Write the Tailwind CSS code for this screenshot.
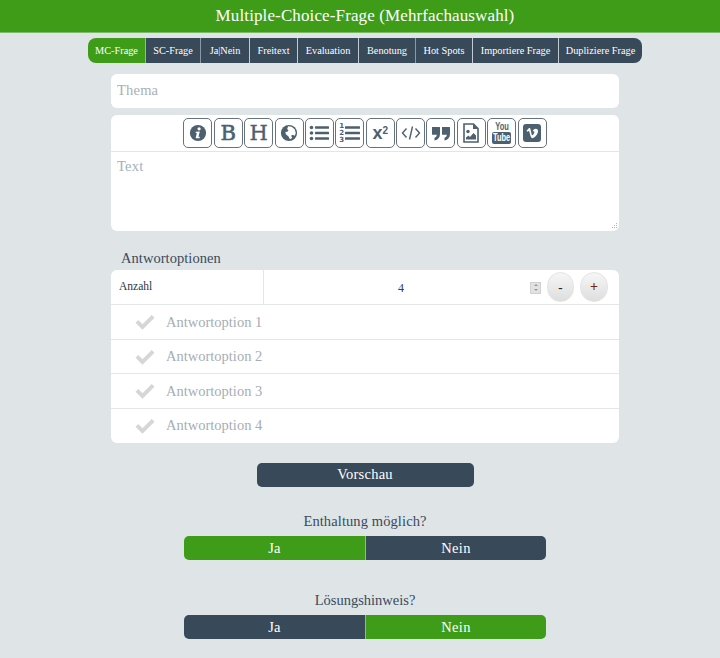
<!DOCTYPE html>
<html lang="de">
  <head>
    <meta charset="UTF-8" />
    <meta name="viewport" content="width=device-width, initial-scale=1.0" />
    <title>Multiple-Choice-Frage</title>
    <script src="https://cdn.jsdelivr.net/npm/@tailwindcss/browser@4"></script>
  </head>
  <body class="bg-[#dfe4e7] overflow-hidden h-[658px] font-['Liberation_Serif',serif] text-[#3a4a5a]">
    <div class="w-[730px] flex flex-col items-center">
      <header class="w-full h-[33px] bg-[#3e9c18] border-b border-[#7fb96a] flex items-center justify-center text-white text-[17px] tracking-[0.12px]">
        Multiple-Choice-Frage (Mehrfachauswahl)
      </header>

      <nav class="mt-[5px] flex h-[25px] w-[554px] rounded-[8px] overflow-hidden text-white text-[10.3px] leading-[25px] text-center">
        <a class="w-[58px] bg-[#3e9c18] border-r border-[#8fbf7d]">MC-Frage</a>
        <a class="w-[55px] bg-[#38495a] border-r border-[#8c99a5]">SC-Frage</a>
        <a class="w-[49px] bg-[#38495a] border-r border-[#c3cbd2]">Ja|Nein</a>
        <a class="w-[48px] bg-[#38495a] border-r border-[#c3cbd2]">Freitext</a>
        <a class="w-[61px] bg-[#38495a] border-r border-[#c3cbd2]">Evaluation</a>
        <a class="w-[57px] bg-[#38495a] border-r border-[#8c99a5]">Benotung</a>
        <a class="w-[57px] bg-[#38495a] border-r border-[#c3cbd2]">Hot Spots</a>
        <a class="w-[86px] bg-[#38495a] border-r border-[#c3cbd2]">Importiere Frage</a>
        <a class="flex-1 bg-[#38495a]">Dupliziere Frage</a>
      </nav>

      <div class="mt-[11px] w-[508px] h-[34px] bg-white rounded-[6px] px-[6px] text-[14.5px] leading-[33px] text-[#a9b0b8] tracking-[0.2px]">Thema</div>

      <section class="mt-[7px] w-[508px] h-[116px] bg-white rounded-[6px] flex flex-col">
        <div class="h-[37px] pt-[3px] border-b border-[#e3e6e8] flex justify-center gap-[1.4px] text-[#4d6070]">
          <button class="w-[29px] h-[30px] rounded-[5px] border border-[#66727d] flex items-center justify-center">
            <svg viewBox="0 0 20 20" class="w-[18px] h-[18px]"><circle cx="10" cy="10" r="9" fill="#4d6070" /><circle cx="11.200" cy="5.300" r="1.800" fill="#fff" /><path d="M7.600 8.600 12 8.200 10.500 14.200 12 14.200 11.700 15.700 7.400 15.700 8.700 10 7.400 10Z" fill="#fff" /></svg>
          </button>
          <button class="w-[29px] h-[30px] rounded-[5px] border border-[#66727d] text-[21px] leading-none font-['DejaVu_Serif',serif] [-webkit-text-stroke:0.6px_#4d6070]">B</button>
          <button class="w-[29px] h-[30px] rounded-[5px] border border-[#66727d] text-[21px] leading-none font-['DejaVu_Serif',serif] [-webkit-text-stroke:0.4px_#4d6070]">H</button>
          <button class="w-[29px] h-[30px] rounded-[5px] border border-[#66727d] flex items-center justify-center">
            <svg viewBox="0 0 20 20" class="w-[18px] h-[18px]"><circle cx="10" cy="10" r="9" fill="#4d6070" /><path d="M9 2.500 13 3 16.500 6 17.500 10 16.500 13 14 12 12.500 13 13.500 15.500 11 17 9.500 14 6.500 11.500 6 9 8 8.500 9.500 7.500 8 5.500Z" fill="#fff" /></svg>
          </button>
          <button class="w-[29px] h-[30px] rounded-[5px] border border-[#66727d] flex items-center justify-center">
            <svg viewBox="0 0 20 18" class="w-[20px] h-[18px]" fill="#4d6070"><circle cx="2.500" cy="3.500" r="1.800" /><circle cx="2.500" cy="9" r="1.800" /><circle cx="2.500" cy="14.500" r="1.800" /><rect x="6" y="2.200" width="14" height="2.600" rx=".5" /><rect x="6" y="7.700" width="14" height="2.600" rx=".5" /><rect x="6" y="13.200" width="14" height="2.600" rx=".5" /></svg>
          </button>
          <button class="w-[29px] h-[30px] rounded-[5px] border border-[#66727d] flex items-center justify-center gap-[1px]">
            <span class="flex flex-col text-[7px] leading-[7px] font-bold font-['DejaVu_Sans',sans-serif]"><span>1</span><span>2</span><span>3</span></span>
            <svg viewBox="0 0 15 18" class="w-[15px] h-[18px]" fill="#4d6070"><rect y="2.200" width="15" height="2.600" rx=".5" /><rect y="7.700" width="15" height="2.600" rx=".5" /><rect y="13.200" width="15" height="2.600" rx=".5" /></svg>
          </button>
          <button class="w-[29px] h-[30px] rounded-[5px] border border-[#66727d] text-[18px] leading-none font-bold font-['Liberation_Sans',sans-serif]">x<sup class="text-[10px]">2</sup></button>
          <button class="w-[29px] h-[30px] rounded-[5px] border border-[#66727d] flex items-center justify-center">
            <svg viewBox="0 0 20 16" class="w-[20px] h-[16px]" fill="none" stroke="#4d6070" stroke-width="1.400"><path d="M5.500 3.500 1.500 8l4 4.500M14.500 3.500l4 4.500-4 4.500M11.500 1.500 8.500 14.500" /></svg>
          </button>
          <button class="w-[29px] h-[30px] rounded-[5px] border border-[#66727d] flex items-center justify-center">
            <svg viewBox="0 0 20 16" class="w-[20px] h-[17px]" fill="#4d6070"><path d="M1 1.500h7.500a.5.5 0 0 1 .5.5v6.500c0 3.500-2 5.800-5.500 6.500v-2.800c1.500-.4 2.200-1.400 2.300-3H1.500a.5.5 0 0 1-.5-.5ZM11 1.500h7.500a.5.5 0 0 1 .5.5v6.500c0 3.500-2 5.800-5.500 6.500v-2.800c1.500-.4 2.200-1.400 2.300-3h-4.300a.5.5 0 0 1-.5-.5Z" /></svg>
          </button>
          <button class="w-[29px] h-[30px] rounded-[5px] border border-[#66727d] flex items-center justify-center">
            <svg viewBox="0 0 16 20" class="w-[16px] h-[20px]"><path d="M1 1h9.500L15 5.500V19H1Z" fill="#fff" stroke="#4d6070" stroke-width="1.600" /><path d="M10 1v5h5" fill="#4d6070" /><circle cx="5" cy="8.500" r="1.700" fill="#4d6070" /><path d="M3 16.500v-2l2.500-2 1.500 1.500 3.500-4 2.500 2.500v4Z" fill="#4d6070" /></svg>
          </button>
          <button class="w-[29px] h-[30px] rounded-[5px] border border-[#66727d] flex flex-col items-center justify-center">
            <span class="text-[10px] leading-[10px] font-bold font-['Liberation_Sans',sans-serif] scale-x-75">You</span>
            <span class="w-[19px] h-[12px] rounded-[2px] bg-[#4d6070] text-white text-[10px] leading-[12px] text-center whitespace-nowrap font-bold font-['Liberation_Sans',sans-serif]"><span class="inline-block scale-x-75 -mx-1">Tube</span></span>
          </button>
          <button class="w-[29px] h-[30px] rounded-[5px] border border-[#66727d] flex items-center justify-center">
            <svg viewBox="0 0 18 18" class="w-[18px] h-[18px]"><rect width="18" height="18" rx="3" fill="#4d6070" /><path d="M3.500 6.800 4.300 7.800c1-.7 1.500-1 1.800-.6.700 1 1 4.500 2 6.100.6 1 1.500 1.200 2.600.5 1.800-1.200 4-3.700 4.300-6.100.2-1.900-.6-3-2.200-3-1.500 0-2.800 1-3.300 2.900 1-.5 2-.3 1.800.8-.1.800-1.300 2.800-2 2.800-.8 0-1-3.500-1.600-5.200C7.300 3.600 6.500 3.600 5.800 4.300Z" fill="#fff" /></svg>
          </button>
        </div>
        <div class="relative flex-1 px-[6px] pt-[6px] text-[14.5px] leading-[17px] text-[#a3b1bd] tracking-[0.2px]">
          Text
          <svg viewBox="0 0 7 7" class="absolute right-[1px] bottom-[1px] w-[7px] h-[7px]" fill="#b5b5b5"><rect x="5" y="0" width="1" height="1" /><rect x="3" y="2" width="1" height="1" /><rect x="5" y="2" width="1" height="1" /><rect x="1" y="4" width="1" height="1" /><rect x="3" y="4" width="1" height="1" /><rect x="5" y="4" width="1" height="1" /></svg>
        </div>
      </section>

      <div class="mt-[18px] w-[508px] pl-[10px] text-[14.5px] leading-[18px] tracking-[0.05px]">Antwortoptionen</div>

      <section class="mt-[3px] w-[508px] bg-white rounded-[6px] text-[14.5px] text-[#a6adb4]">
        <div class="h-[35px] flex items-center border-b border-[#e4e7e9]">
          <div class="w-[153px] h-full border-r border-[#e4e7e9] pl-2 flex items-center text-[11.5px] text-[#2a3540]">Anzahl</div>
          <div class="flex-1 flex items-center relative h-full">
            <span class="w-[274px] text-center text-[12px] text-[#2f4254] pt-[2px]">4</span>
            <span class="w-[11px] h-[12px] ml-[-8px] mt-[1px] bg-[#e2e2e2] border border-[#d0d0d0] flex flex-col items-center justify-around">
              <span class="w-0 h-0 border-x-[2px] border-x-transparent border-b-[2px] border-b-[#999]"></span>
              <span class="w-0 h-0 border-x-[2px] border-x-transparent border-t-[2px] border-t-[#999]"></span>
            </span>
            <button class="ml-[6px] w-[27px] h-[30px] rounded-full bg-gradient-to-b from-[#f6f6f6] to-[#dedede] border border-[#e4e4e4] text-[#222] text-[13px] font-bold leading-none">-</button>
            <button class="ml-[6px] w-[28px] h-[30px] rounded-full bg-gradient-to-b from-[#f6f6f6] to-[#dedede] border border-[#e4e4e4] text-[#6a2a10] text-[14px] font-bold leading-none">+</button>
          </div>
        </div>
        <div class="h-[35px] flex items-center border-b border-[#e4e7e9] pl-[24px] gap-[11px]">
          <svg viewBox="0 0 20 16" class="w-[20px] h-[16px]" fill="#d6d6d6"><path d="M7.500 15.800 0.500 8.800l2.800-2.800 4.200 4.200L16.700 1l2.800 2.800Z" /></svg>
          <span class="pt-[1px]">Antwortoption 1</span>
        </div>
        <div class="h-[34px] flex items-center border-b border-[#e4e7e9] pl-[24px] gap-[11px]">
          <svg viewBox="0 0 20 16" class="w-[20px] h-[16px]" fill="#d6d6d6"><path d="M7.500 15.800 0.500 8.800l2.800-2.800 4.200 4.200L16.700 1l2.800 2.800Z" /></svg>
          <span>Antwortoption 2</span>
        </div>
        <div class="h-[35px] flex items-center border-b border-[#e4e7e9] pl-[24px] gap-[11px]">
          <svg viewBox="0 0 20 16" class="w-[20px] h-[16px]" fill="#d6d6d6"><path d="M7.500 15.800 0.500 8.800l2.800-2.800 4.200 4.200L16.700 1l2.800 2.800Z" /></svg>
          <span class="pt-[1px]">Antwortoption 3</span>
        </div>
        <div class="h-[34px] flex items-center pl-[24px] gap-[11px]">
          <svg viewBox="0 0 20 16" class="w-[20px] h-[16px]" fill="#d6d6d6"><path d="M7.500 15.800 0.500 8.800l2.800-2.800 4.200 4.200L16.700 1l2.800 2.800Z" /></svg>
          <span>Antwortoption 4</span>
        </div>
      </section>

      <button class="mt-5 w-[217px] h-[24px] rounded-[5px] bg-[#38495a] text-white text-[14.5px] tracking-[0.25px]">Vorschau</button>

      <p class="mt-[25px] h-[24px] text-[14.5px] leading-[18px] tracking-[0.1px]">Enthaltung möglich?</p>
      <div class="w-[362px] h-[24px] flex rounded-[5px] overflow-hidden text-white text-[14.5px] leading-[24px] text-center tracking-[0.3px]">
        <span class="w-[182px] bg-[#3e9c18] border-r border-[#8fbf7d]">Ja</span>
        <span class="flex-1 bg-[#38495a]">Nein</span>
      </div>

      <p class="mt-[31px] h-[24px] text-[14.5px] leading-[18px]">Lösungshinweis?</p>
      <div class="w-[362px] h-[24px] flex rounded-[5px] overflow-hidden text-white text-[14.5px] leading-[24px] text-center tracking-[0.3px]">
        <span class="w-[182px] bg-[#38495a] border-r border-[#8fbf7d]">Ja</span>
        <span class="flex-1 bg-[#3e9c18]">Nein</span>
      </div>
    </div>
  </body>
</html>
